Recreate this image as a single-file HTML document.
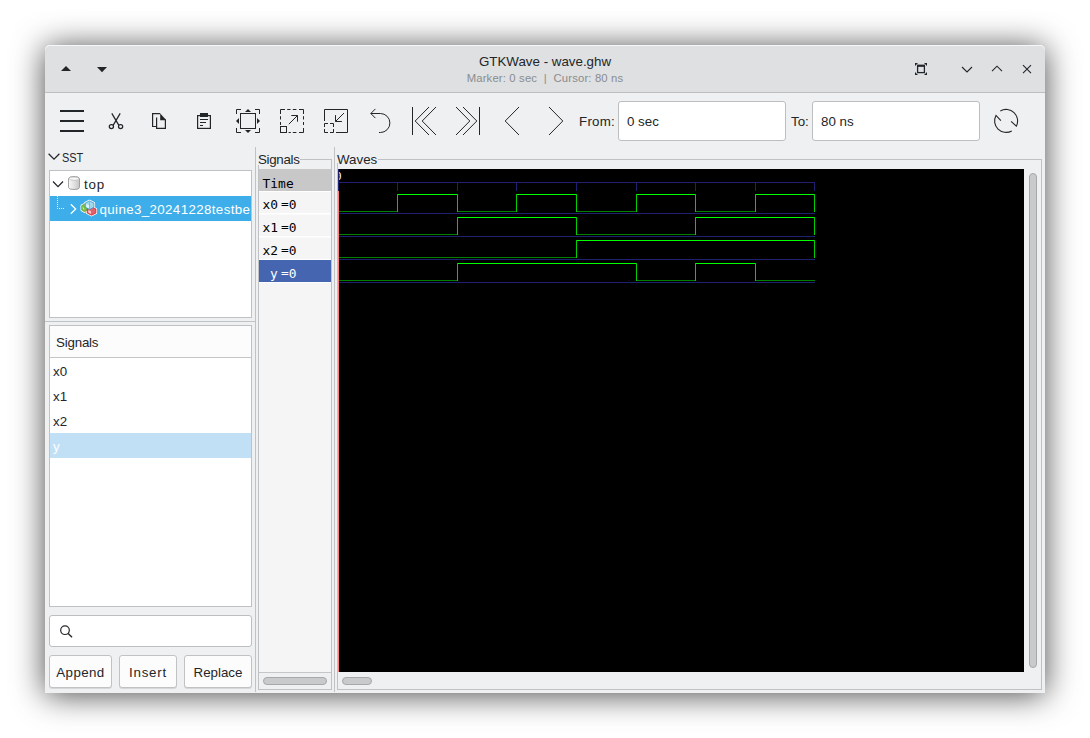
<!DOCTYPE html>
<html lang="en">
<head>
<meta charset="utf-8">
<title>GTKWave - wave.ghw</title>
<style>
*{box-sizing:border-box;margin:0;padding:0}
html,body{width:1090px;height:738px;overflow:hidden;background:#fff}
body{font-family:"Liberation Sans","DejaVu Sans",sans-serif;font-size:13.33px;color:#232629;position:relative}
div,span{position:absolute}
#win{left:45px;top:45px;width:1000px;height:648px;background:#eff0f1;border-radius:5px 5px 0 0;
 box-shadow:0 2px 32px rgba(0,0,0,.72)}
#title{left:45px;top:45px;width:1000px;height:48px;background:#dee0e2;border-radius:5px 5px 0 0;border-bottom:1px solid #bcbec0;box-shadow:inset 0 1px 0 rgba(255,255,255,.75)}
.t1{left:45px;width:1000px;top:54px;text-align:center;font-size:13.33px;line-height:16px;color:#232629}
.t2{left:45px;width:1000px;top:71px;text-align:center;font-size:11.3px;letter-spacing:.16px;line-height:14px;color:#8a8c8e}
svg{position:absolute;overflow:visible}
.lbl{white-space:nowrap;line-height:16px}
.entry{background:#fff;border:1px solid #bcbebf;border-radius:3px}
.box{background:#fff;border:1px solid #bfc1c3}
.btn{background:#fcfcfc;border:1px solid #c0c2c4;border-radius:3px;text-align:center;line-height:33px;box-shadow:0 1px 0 rgba(0,0,0,.10)}
.mono{font-family:"DejaVu Sans Mono","Liberation Mono",monospace;font-size:12.9px;line-height:16px;white-space:nowrap;color:#000}
.mono b{font-weight:400;position:relative;top:-1.3px}
.ln{background:#c0c2c4}
.sb{background:#c9cacb;border:1px solid #a6a8aa;border-radius:4px}
</style>
</head>
<body>
<div id="win"></div>
<div id="title"></div>
<div class="t1">GTKWave - wave.ghw</div>
<div class="t2">Marker: 0 sec&nbsp; |&nbsp; Cursor: 80 ns</div>

<!-- titlebar buttons -->
<svg width="1090" height="100" style="left:0;top:0" viewBox="0 0 1090 100">
 <path d="M61 71.100 L66 65.900 L71 71.100 Z" fill="#232629"/>
 <path d="M97 67 L102 72.2 L107 67 Z" fill="#232629"/>
 <!-- fullscreen -->
 <g fill="none" stroke="#232629" stroke-width="1.3">
  <rect x="917.6" y="66" width="6.8" height="6.6"/>
  <path d="M917 65.6 H925" stroke-width="2"/>
 </g>
 <g fill="#232629">
  <path d="M915 63 h3 l-3 3z M927 63 v3 l-3 -3z M915 75 v-3 l3 3z M927 75 h-3 l3 -3z"/>
 </g>
 <g fill="none" stroke="#232629" stroke-width="1.1">
  <path d="M962 67 L967 72 L972 67"/>
  <path d="M992 71.2 L997 66.2 L1002 71.2"/>
  <path d="M1023 65.2 L1031 73.2 M1031 65.2 L1023 73.2"/>
 </g>
</svg>

<!-- toolbar -->
<svg width="1090" height="160" style="left:0;top:0" viewBox="0 0 1090 160">
 <g fill="#232629">
  <rect x="60" y="110" width="24" height="2"/>
  <rect x="60" y="120" width="24" height="2"/>
  <rect x="60" y="130" width="24" height="2"/>
 </g>
 <!-- scissors -->
 <g fill="none" stroke="#232629" stroke-width="1.25">
  <path d="M111.800 113.400 L118.900 125.400 M120.200 113.400 L113.100 125.400"/>
  <circle cx="111.400" cy="126.600" r="2.100"/>
  <circle cx="120.600" cy="126.600" r="2.100"/>
 </g>
 <!-- copy -->
 <g fill="none" stroke="#232629" stroke-width="1.2">
  <path d="M156 126.500 H152.600 V113.600 H160.200"/>
  <path d="M156.600 117.400 V128.400 H165.400 V119.600"/>
 </g>
 <path d="M160.200 113.400 L165.800 119.600 V120.200 H160.200 Z" fill="#232629"/>
 <!-- paste -->
 <g fill="none" stroke="#232629" stroke-width="1.2">
  <rect x="197.6" y="115.6" width="12.8" height="12.8"/>
 </g>
 <g fill="#232629">
  <rect x="200" y="113" width="8" height="4"/>
  <rect x="200" y="119" width="8" height="1"/>
  <rect x="200" y="122" width="6" height="1"/>
  <rect x="200" y="125" width="3" height="1"/>
 </g>
 <!-- zoom fit -->
 <g fill="none" stroke="#232629" stroke-width="1">
  <rect x="240.5" y="113.5" width="15" height="15"/>
  <path d="M236.5 114 V109.500 H241 M255 109.500 H259.500 V114 M259.500 128 V132.500 H255 M241 132.500 H236.500 V128"/>
 </g>
 <g fill="#232629">
  <path d="M245 112 L248 109 L251 112 Z"/>
  <path d="M245 130 L248 133 L251 130 Z"/>
  <path d="M239 118 L236 121 L239 124 Z"/>
  <path d="M257 118 L260 121 L257 124 Z"/>
 </g>
 <!-- zoom in (dashed square with arrow out) -->
 <g fill="none" stroke="#232629" stroke-width="1">
  <path d="M280.500 114 V109.500 H285 M287.200 109.500 H290.500 M292.800 109.500 H296.400 M299 109.500 H303.500 V114 M303.500 116.200 V119.500 M303.500 122 V125 M303.500 128 V132.500 H299 M296.400 132.500 H292.800 M290.800 132.500 H288.600 M280.500 116.200 V119.500 M280.500 122 V125"/>
  <rect x="280.500" y="126.500" width="6" height="6"/>
  <path d="M288.800 124.200 L297.500 115.500 M291.300 115.500 H297.500 V121.700"/>
 </g>
 <!-- zoom out -->
 <g fill="none" stroke="#232629" stroke-width="1">
  <path d="M324.500 121 V109.500 H347.500 V132.500 H336"/>
  <path d="M324.500 127 V123.500 H328 M330 123.500 H333.500 V127 M333.500 129 V132.500 H330 M328 132.500 H324.500 V129"/>
  <path d="M344 113 L335.500 121.500 M335.500 115.100 V121.500 H341.900"/>
 </g>
 <!-- undo -->
 <g fill="none" stroke="#232629" stroke-width="1">
  <path d="M375.400 108.900 L370.800 113.500 L375.400 118.100"/>
  <path d="M370.800 113.500 H380.400 A 9.500 9.500 0 0 1 380.400 132.500 H379"/>
 </g>
 <!-- nav arrows -->
 <g fill="none" stroke="#232629" stroke-width="1">
  <path d="M412.500 107 V135"/>
  <path d="M429 107 L415.200 121 L429 135"/>
  <path d="M436 107 L422.200 121 L436 135"/>
  <path d="M479.500 107 V135"/>
  <path d="M456 107 L469.800 121 L456 135"/>
  <path d="M463 107 L476.800 121 L463 135"/>
  <path d="M519 107 L505.200 121 L519 135"/>
  <path d="M549 107 L562.800 121 L549 135"/>
 </g>
 <!-- reload -->
 <g fill="none" stroke="#232629" stroke-width="1.1">
  <path d="M1000.320 110.960 A11.500 11.500 0 0 1 1016.310 126.190 L1011.100 121.300"/>
  <path d="M1011.750 130.920 A11.500 11.500 0 0 1 995.970 115.450 L1000.900 120.600"/>
 </g>
</svg>

<div class="lbl" style="left:579px;top:114px;letter-spacing:.25px">From:</div>
<div class="entry" style="left:618px;top:101px;width:168px;height:40px"></div>
<div class="lbl" style="left:627px;top:114px">0 sec</div>
<div class="lbl" style="left:791px;top:114px">To:</div>
<div class="entry" style="left:812px;top:101px;width:168px;height:40px"></div>
<div class="lbl" style="left:821px;top:114px">80 ns</div>

<!-- left pane -->
<svg width="20" height="20" style="left:45px;top:148px" viewBox="45 148 20 20">
 <path d="M48.600 153.700 L54 159.200 L59.400 153.700" fill="none" stroke="#232629" stroke-width="1.25"/>
</svg>
<div class="lbl" style="left:62px;top:150px;transform:scaleX(.82);transform-origin:0 0">SST</div>
<div class="box" style="left:49px;top:170px;width:203px;height:148px"></div>
<div style="left:50px;top:196px;width:201px;height:25px;background:#3daee9"></div>
<svg width="210" height="60" style="left:45px;top:168px" viewBox="45 168 210 60">
 <path d="M53 181.500 L58 186.600 L63 181.500" fill="none" stroke="#232629" stroke-width="1.25"/>
 <!-- cylinder -->
 <defs>
  <linearGradient id="cy" x1="0" x2="1" y1="0" y2="0">
   <stop offset="0" stop-color="#fafafa"/><stop offset=".5" stop-color="#e2e2e2"/><stop offset="1" stop-color="#c4c4c4"/>
  </linearGradient>
 </defs>
 <path d="M68.500 178.500 Q68.500 176.500 74 176.500 Q79.500 176.500 79.500 178.500 V187.500 Q79.500 189.500 74 189.500 Q68.500 189.500 68.500 187.500 Z" fill="url(#cy)" stroke="#999" stroke-width=".9"/>
 <ellipse cx="74" cy="178.700" rx="4.800" ry="1.700" fill="#f6f6f6" stroke="#b0b0b0" stroke-width=".6"/>
 <!-- dotted connector -->
 <path d="M57.500 196 V208.500 H64" fill="none" stroke="#fff" stroke-width="1" stroke-dasharray="1 1"/>
 <path d="M70.800 204.200 L75.700 209 L70.800 213.800" fill="none" stroke="#fff" stroke-width="1.25"/>
 <!-- cubes icon -->
 <g stroke="#fff" stroke-width="2.400" stroke-linejoin="round" fill="#fff">
  <path d="M81.700 205.600 L84.500 204.200 L87.500 205.600 V210 L84.500 211.800 L81.700 210 Z"/>
  <path d="M87.200 209 L91.500 207 L95.900 209 V213 L91.500 215.200 L87.200 213 Z"/>
  <path d="M85.200 203 L89.500 200.900 L93.900 203 V207.300 L89.500 209.500 L85.200 207.300 Z"/>
 </g>
 <path d="M81.700 205.600 L84.500 204.200 L87.500 205.600 V210 L84.500 211.800 L81.700 210 Z" fill="#7cc043" stroke="#5a9a2c" stroke-width=".7"/>
 <path d="M82.800 206.500 L84.300 209.500 L83 209.300 Z" fill="#eaf5dc"/>
 <path d="M87.200 209 L91.500 207 L95.900 209 V213 L91.500 215.200 L87.200 213 Z" fill="#e4606a" stroke="#c8242e" stroke-width=".8"/>
 <path d="M88.300 210 L91 211.300 V214 L88.300 212.600 Z" fill="#f7c9cc"/>
 <path d="M85.200 203 L89.500 200.900 L93.900 203 V207.300 L89.500 209.500 L85.200 207.300 Z" fill="#9fd9ee" stroke="#3b98c4" stroke-width=".8"/>
 <path d="M86.300 204 L89 205.300 V208.300 L86.300 206.900 Z" fill="#e3f4fb"/>
 <path d="M89.500 201.500 V209" stroke="#5ab0d6" stroke-width=".6" fill="none"/>
</svg>
<div class="lbl" style="left:84px;top:177px;letter-spacing:.8px">top</div>
<div class="lbl" style="left:99.500px;top:202px;color:#fff;width:151.500px;overflow:hidden;letter-spacing:.37px">quine3_20241228testbench</div>

<div class="ln" style="left:45px;top:321px;width:211px;height:1px"></div>
<div class="box" style="left:49px;top:325px;width:203px;height:282px"></div>
<div style="left:50px;top:326px;width:201px;height:31px;background:#fcfcfc"></div>
<div class="ln" style="left:50px;top:357px;width:201px;height:1px;background:#c4c6c8"></div>
<div class="lbl" style="left:56px;top:335px;letter-spacing:-.2px">Signals</div>
<div class="lbl" style="left:53px;top:364px">x0</div>
<div class="lbl" style="left:53px;top:389px">x1</div>
<div class="lbl" style="left:53px;top:414px">x2</div>
<div style="left:50px;top:433px;width:201px;height:25px;background:#c2e0f5"></div>
<div class="lbl" style="left:53px;top:439px;color:#fafdff">y</div>

<div class="entry" style="left:49px;top:615px;width:203px;height:32px"></div>
<svg width="20" height="20" style="left:58px;top:622px" viewBox="58 622 20 20">
 <circle cx="65" cy="630.200" r="4.300" fill="none" stroke="#232629" stroke-width="1.200"/>
 <path d="M68.200 633.400 L72 637.200" stroke="#232629" stroke-width="1.400" fill="none"/>
</svg>
<div class="btn" style="left:49px;top:655px;width:63px;height:33px;letter-spacing:.4px">Append</div>
<div class="btn" style="left:119px;top:655px;width:58px;height:33px;letter-spacing:.8px">Insert</div>
<div class="btn" style="left:184px;top:655px;width:68px;height:33px">Replace</div>

<!-- pane separators -->
<div class="ln" style="left:255px;top:147px;width:1px;height:545px"></div>
<div class="ln" style="left:334px;top:147px;width:1px;height:545px"></div>

<!-- signals frame -->
<div style="left:258px;top:159px;width:74px;height:531px;border:1px solid #bfc1c3"></div>
<div style="left:258px;top:150px;width:42px;height:15px;background:#eff0f1"></div>
<div class="lbl" style="left:258px;top:152px;letter-spacing:-.3px">Signals</div>
<div style="left:259px;top:169px;width:72px;height:503px;background:#f5f5f5"></div>
<div style="left:259px;top:169px;width:72px;height:22px;background:#c8c8c8"></div>
<div style="left:259px;top:191px;width:72px;height:1px;background:#fff"></div>
<div style="left:259px;top:213px;width:72px;height:2px;background:#fafafa;border-top:1px solid #fff"></div>
<div style="left:259px;top:236px;width:72px;height:2px;background:#fafafa;border-top:1px solid #fff"></div>
<div style="left:259px;top:259px;width:72px;height:1px;background:#fff"></div>
<div style="left:259px;top:260px;width:72px;height:22px;background:#4565b0"></div>
<div style="left:259px;top:282px;width:72px;height:1px;background:#fff"></div>
<div class="ln" style="left:259px;top:672px;width:72px;height:1px;background:#c4c6c8"></div>
<div class="mono" style="left:262.6px;top:176px">Time</div>
<div class="mono" style="left:262.4px;top:197px">x0</div><div class="mono" style="left:281px;top:197px"><b>=</b>0</div>
<div class="mono" style="left:262.4px;top:220px">x1</div><div class="mono" style="left:281px;top:220px"><b>=</b>0</div>
<div class="mono" style="left:262.4px;top:243px">x2</div><div class="mono" style="left:281px;top:243px"><b>=</b>0</div>
<div class="mono" style="left:270px;top:266px;color:#fff">y</div><div class="mono" style="left:281px;top:266px;color:#fff"><b>=</b>0</div>
<div class="sb" style="left:263px;top:677px;width:64px;height:8px"></div>

<!-- waves frame -->
<div style="left:337px;top:159px;width:705px;height:531px;border:1px solid #bfc1c3"></div>
<div style="left:337px;top:150px;width:40.500px;height:13px;background:#eff0f1"></div>
<div class="lbl" style="left:337px;top:152px">Waves</div>
<div style="left:338px;top:169px;width:686px;height:503px;background:#000;overflow:hidden">
 <div class="mono" style="left:-2.9px;top:2px;font-size:11px;line-height:12px;color:#fff">0</div>
</div>
<svg width="1090" height="738" style="left:0;top:0" viewBox="0 0 1090 738" shape-rendering="crispEdges">
<rect x="338" y="182" width="477" height="1" fill="#202070"/>
<rect x="338" y="169" width="1" height="22" fill="#202070"/>
<rect x="338" y="182" width="1" height="9" fill="#202070"/>
<rect x="397" y="182" width="1" height="9" fill="#202070"/>
<rect x="457" y="182" width="1" height="9" fill="#202070"/>
<rect x="516" y="182" width="1" height="9" fill="#202070"/>
<rect x="576" y="182" width="1" height="9" fill="#202070"/>
<rect x="636" y="182" width="1" height="9" fill="#202070"/>
<rect x="695" y="182" width="1" height="9" fill="#202070"/>
<rect x="755" y="182" width="1" height="9" fill="#202070"/>
<rect x="814" y="182" width="1" height="9" fill="#202070"/>
<rect x="338" y="213" width="477" height="1" fill="#202070"/>
<rect x="338" y="211" width="60" height="1" fill="#008000"/>
<rect x="397" y="194" width="61" height="1" fill="#00ff00"/>
<rect x="397" y="194" width="1" height="18" fill="#00d000"/>
<rect x="457" y="211" width="60" height="1" fill="#008000"/>
<rect x="457" y="194" width="1" height="18" fill="#00d000"/>
<rect x="516" y="194" width="61" height="1" fill="#00ff00"/>
<rect x="516" y="194" width="1" height="18" fill="#00d000"/>
<rect x="576" y="211" width="61" height="1" fill="#008000"/>
<rect x="576" y="194" width="1" height="18" fill="#00d000"/>
<rect x="636" y="194" width="60" height="1" fill="#00ff00"/>
<rect x="636" y="194" width="1" height="18" fill="#00d000"/>
<rect x="695" y="211" width="61" height="1" fill="#008000"/>
<rect x="695" y="194" width="1" height="18" fill="#00d000"/>
<rect x="755" y="194" width="60" height="1" fill="#00ff00"/>
<rect x="755" y="194" width="1" height="18" fill="#00d000"/>
<rect x="814" y="194" width="1" height="18" fill="#00d000"/>
<rect x="338" y="236" width="477" height="1" fill="#202070"/>
<rect x="338" y="234" width="60" height="1" fill="#008000"/>
<rect x="397" y="234" width="61" height="1" fill="#008000"/>
<rect x="457" y="217" width="60" height="1" fill="#00ff00"/>
<rect x="457" y="217" width="1" height="18" fill="#00d000"/>
<rect x="516" y="217" width="61" height="1" fill="#00ff00"/>
<rect x="576" y="234" width="61" height="1" fill="#008000"/>
<rect x="576" y="217" width="1" height="18" fill="#00d000"/>
<rect x="636" y="234" width="60" height="1" fill="#008000"/>
<rect x="695" y="217" width="61" height="1" fill="#00ff00"/>
<rect x="695" y="217" width="1" height="18" fill="#00d000"/>
<rect x="755" y="217" width="60" height="1" fill="#00ff00"/>
<rect x="814" y="217" width="1" height="18" fill="#00d000"/>
<rect x="338" y="259" width="477" height="1" fill="#202070"/>
<rect x="338" y="257" width="60" height="1" fill="#008000"/>
<rect x="397" y="257" width="61" height="1" fill="#008000"/>
<rect x="457" y="257" width="60" height="1" fill="#008000"/>
<rect x="516" y="257" width="61" height="1" fill="#008000"/>
<rect x="576" y="240" width="61" height="1" fill="#00ff00"/>
<rect x="576" y="240" width="1" height="18" fill="#00d000"/>
<rect x="636" y="240" width="60" height="1" fill="#00ff00"/>
<rect x="695" y="240" width="61" height="1" fill="#00ff00"/>
<rect x="755" y="240" width="60" height="1" fill="#00ff00"/>
<rect x="814" y="240" width="1" height="18" fill="#00d000"/>
<rect x="338" y="282" width="477" height="1" fill="#202070"/>
<rect x="338" y="280" width="60" height="1" fill="#008000"/>
<rect x="397" y="280" width="61" height="1" fill="#008000"/>
<rect x="457" y="263" width="60" height="1" fill="#00ff00"/>
<rect x="457" y="263" width="1" height="18" fill="#00d000"/>
<rect x="516" y="263" width="61" height="1" fill="#00ff00"/>
<rect x="576" y="263" width="61" height="1" fill="#00ff00"/>
<rect x="636" y="280" width="60" height="1" fill="#008000"/>
<rect x="636" y="263" width="1" height="18" fill="#00d000"/>
<rect x="695" y="263" width="61" height="1" fill="#00ff00"/>
<rect x="695" y="263" width="1" height="18" fill="#00d000"/>
<rect x="755" y="280" width="60" height="1" fill="#008000"/>
<rect x="755" y="263" width="1" height="18" fill="#00d000"/>
<rect x="338" y="191" width="1" height="481" fill="#ff8080"/>
</svg>
<div class="sb" style="left:1029px;top:173px;width:8px;height:495px"></div>
<div class="sb" style="left:342px;top:677px;width:30px;height:8px"></div>
</body>
</html>
